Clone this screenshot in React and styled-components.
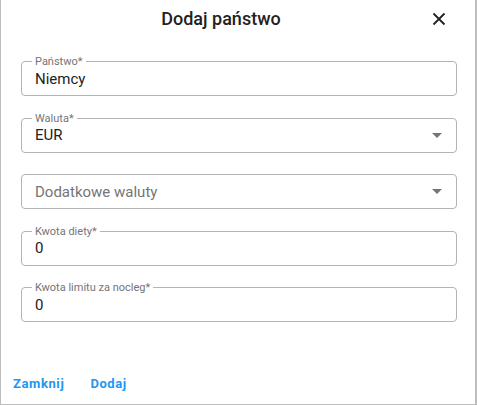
import React from "react";
import styled, { createGlobalStyle } from "styled-components";

const GlobalStyle = createGlobalStyle`
  * {
    box-sizing: border-box;
  }
  body {
    margin: 0;
    font-family: Roboto, "Liberation Sans", Arial, sans-serif;
    background: #fff;
  }
`;

const Dialog = styled.div`
  width: 477px;
  height: 405px;
  display: flex;
  flex-direction: column;
  border: 1px solid #bdbdbd;
  border-top: none;
  border-right-width: 2px;
  background: #fff;
`;

const Header = styled.div`
  display: flex;
  align-items: center;
  height: 37px;
  padding-right: 24px;
`;

const Title = styled.h2`
  flex: 1;
  margin: 0;
  padding-left: 14px;
  text-align: center;
  font-size: 18px;
  font-weight: 500;
  color: #212121;
`;

const CloseButton = styled.button`
  width: 24px;
  height: 24px;
  padding: 0;
  border: none;
  background: transparent;
  display: flex;
  align-items: center;
  justify-content: center;
  color: #212121;
  cursor: pointer;
`;

const Body = styled.div`
  display: flex;
  flex-direction: column;
  gap: 21.5px;
  padding: 24px 18px 0 20px;
`;

const Field = styled.div`
  position: relative;
  height: 35px;
  display: flex;
  align-items: center;
  padding: 0 13px;
  border: 1px solid #b3b3b3;
  border-radius: 4px;
`;

const Label = styled.span`
  position: absolute;
  top: -7px;
  left: 10px;
  padding: 0 3px;
  background: #fff;
  font-size: 11px;
  line-height: 13px;
  color: #757575;
`;

const Value = styled.span`
  flex: 1;
  font-size: 15px;
  color: ${(p) => (p.$placeholder ? "#757575" : "#212121")};
`;

const Arrow = styled.span`
  width: 0;
  height: 0;
  margin-right: 1px;
  border-left: 5px solid transparent;
  border-right: 5px solid transparent;
  border-top: 5px solid #757575;
`;

const Footer = styled.div`
  margin-top: auto;
  display: flex;
  gap: 2px;
  padding: 0 0 7px 0;
`;

const TextButton = styled.button`
  padding: 6px 12px;
  border: none;
  background: transparent;
  font-family: inherit;
  font-size: 13px;
  font-weight: 700;
  letter-spacing: 0.6px;
  color: #2196f3;
  cursor: pointer;
`;

const fields = [
  { label: "Państwo*", value: "Niemcy" },
  { label: "Waluta*", value: "EUR", select: true },
  { value: "Dodatkowe waluty", select: true, placeholder: true },
  { label: "Kwota diety*", value: "0" },
  { label: "Kwota limitu za nocleg*", value: "0" },
];

const App = () => {
  return (
    <>
      <GlobalStyle />
      <Dialog>
        <Header>
          <Title>Dodaj państwo</Title>
          <CloseButton aria-label="close">
            <svg width="14" height="14" viewBox="0 0 14 14">
              <path
                d="M1.5 1.5 L12.5 12.5 M12.5 1.5 L1.5 12.5"
                stroke="currentColor"
                strokeWidth="1.8"
              />
            </svg>
          </CloseButton>
        </Header>
        <Body>
          {fields.map((f, i) => (
            <Field key={i}>
              {f.label ? <Label>{f.label}</Label> : null}
              <Value $placeholder={f.placeholder}>{f.value}</Value>
              {f.select ? <Arrow /> : null}
            </Field>
          ))}
        </Body>
        <Footer>
          <TextButton>Zamknij</TextButton>
          <TextButton>Dodaj</TextButton>
        </Footer>
      </Dialog>
    </>
  );
};

export default App;
